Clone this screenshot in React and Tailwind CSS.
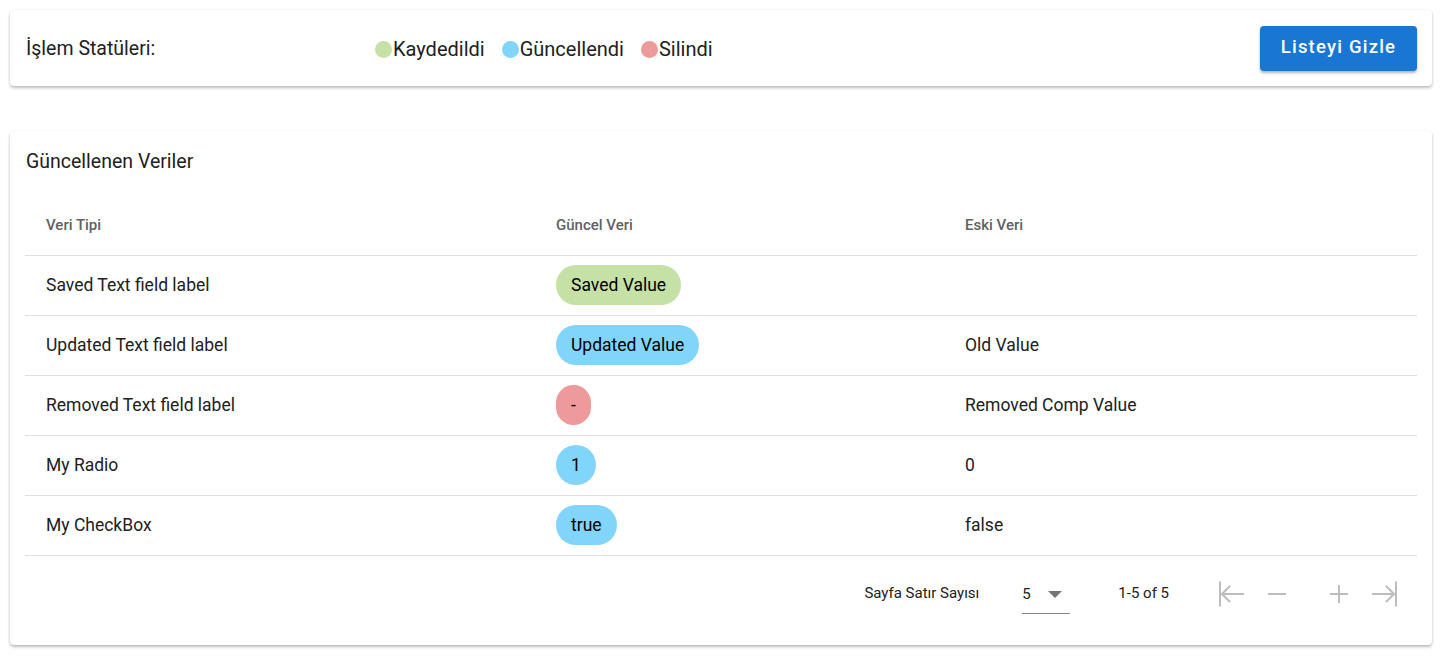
import React from 'react';

const font = { fontFamily: 'Roboto, "Noto Sans", sans-serif' };

const legend = [
  { label: 'Kaydedildi', color: 'bg-[#c5e1a5]' },
  { label: 'Güncellendi', color: 'bg-[#81d4fa]' },
  { label: 'Silindi', color: 'bg-[#ef9a9a]' },
];

const rows = [
  { type: 'Saved Text field label', value: 'Saved Value', chip: 'bg-[#c5e1a5]', old: '' },
  { type: 'Updated Text field label', value: 'Updated Value', chip: 'bg-[#81d4fa]', old: 'Old Value' },
  { type: 'Removed Text field label', value: '-', chip: 'bg-[#ef9a9a]', old: 'Removed Comp Value' },
  { type: 'My Radio', value: '1', chip: 'bg-[#81d4fa]', old: '0' },
  { type: 'My CheckBox', value: 'true', chip: 'bg-[#81d4fa]', old: 'false' },
];

const FirstPageIcon = () => (
  <svg width="26" height="26" viewBox="0 0 26 26" fill="none" stroke="#bdbdbd" strokeWidth="2">
    <path d="M1 0.5V25.5" />
    <path d="M3 13H25" />
    <path d="M11 5L3 13L11 21" />
  </svg>
);

const LastPageIcon = () => (
  <svg width="26" height="26" viewBox="0 0 26 26" fill="none" stroke="#bdbdbd" strokeWidth="2">
    <path d="M25 0.5V25.5" />
    <path d="M1 13H23" />
    <path d="M15 5L23 13L15 21" />
  </svg>
);

const MinusIcon = () => (
  <svg width="18" height="18" viewBox="0 0 18 18" fill="none" stroke="#bdbdbd" strokeWidth="2">
    <path d="M0 9H18" />
  </svg>
);

const PlusIcon = () => (
  <svg width="18" height="18" viewBox="0 0 18 18" fill="none" stroke="#bdbdbd" strokeWidth="2">
    <path d="M0 9H18" />
    <path d="M9 0V18" />
  </svg>
);

export default function App() {
  return (
    <div className="min-h-screen bg-white pl-[10px] pr-[16px] pt-[10px] text-[#212121]" style={font}>
      <div className="h-[76px] bg-white rounded shadow-[0_2px_3px_rgba(0,0,0,0.25),0_0_2px_rgba(0,0,0,0.08)] flex items-center pl-[16px] pr-[15px]">
        <div className="w-[349px] text-[19.5px] pt-[2px]">İşlem Statüleri:</div>
        <div className="flex items-center gap-[17px] text-[20px] pt-[2px]">
          {legend.map((l) => (
            <div key={l.label} className="flex items-center">
              <span className={`w-[17px] h-[17px] rounded-full ${l.color} mr-[1px]`} />
              <span>{l.label}</span>
            </div>
          ))}
        </div>
        <button className="ml-auto w-[157px] h-[45px] rounded bg-[#1976d2] text-white text-[18.5px] font-medium tracking-[1.2px] shadow-[0_2px_3px_rgba(0,0,0,0.3)]">
          Listeyi Gizle
        </button>
      </div>

      <div className="mt-[45px] bg-white rounded shadow-[0_2px_3px_rgba(0,0,0,0.25),0_0_2px_rgba(0,0,0,0.08)] px-[15px] pt-[17px] pb-[15px]">
        <div className="h-[28px] leading-[28px] text-[19.5px] pl-[1px]">Güncellenen Veriler</div>
        <table className="w-full mt-[17px] border-collapse">
          <thead>
            <tr className="h-[62px] border-b border-[#e0e0e0]">
              <th className="w-[510px] text-left pl-[21px] pt-[2px] text-[15px] font-medium text-[#616161]">Veri Tipi</th>
              <th className="w-[409px] text-left pl-[21px] pt-[2px] text-[15px] font-medium text-[#616161]">Güncel Veri</th>
              <th className="text-left pl-[21px] pt-[2px] text-[15px] font-medium text-[#616161]">Eski Veri</th>
            </tr>
          </thead>
          <tbody>
            {rows.map((r) => (
              <tr key={r.type} className="h-[60px] border-b border-[#e0e0e0] text-[17.5px]">
                <td className="pl-[21px]">{r.type}</td>
                <td className="pl-[21px]">
                  <span className={`inline-flex items-center justify-center h-[40px] min-w-[35px] px-[15px] rounded-full ${r.chip} text-black`}>
                    {r.value}
                  </span>
                </td>
                <td className="pl-[21px]">{r.old}</td>
              </tr>
            ))}
          </tbody>
        </table>
        <div className="h-[74px] flex items-center justify-end pr-[20px] text-[15px]">
          <span className="mr-[43px] pt-[2px]">Sayfa Satır Sayısı</span>
          <div className="w-[48px] h-[40px] flex items-center border-b border-[#8a8a8a] mt-[2px] mr-[48px] pt-[2px]">
            <span>5</span>
            <svg className="ml-[17px]" width="14" height="7" viewBox="0 0 14 7">
              <path d="M0 0H14L7 7Z" fill="#757575" />
            </svg>
          </div>
          <span className="mr-[50px] pt-[2px]">1-5 of 5</span>
          <div className="flex items-center pt-[2px]">
            <FirstPageIcon />
            <span className="ml-[23px]"><MinusIcon /></span>
            <span className="ml-[44px]"><PlusIcon /></span>
            <span className="ml-[23px]"><LastPageIcon /></span>
          </div>
        </div>
      </div>
    </div>
  );
}
